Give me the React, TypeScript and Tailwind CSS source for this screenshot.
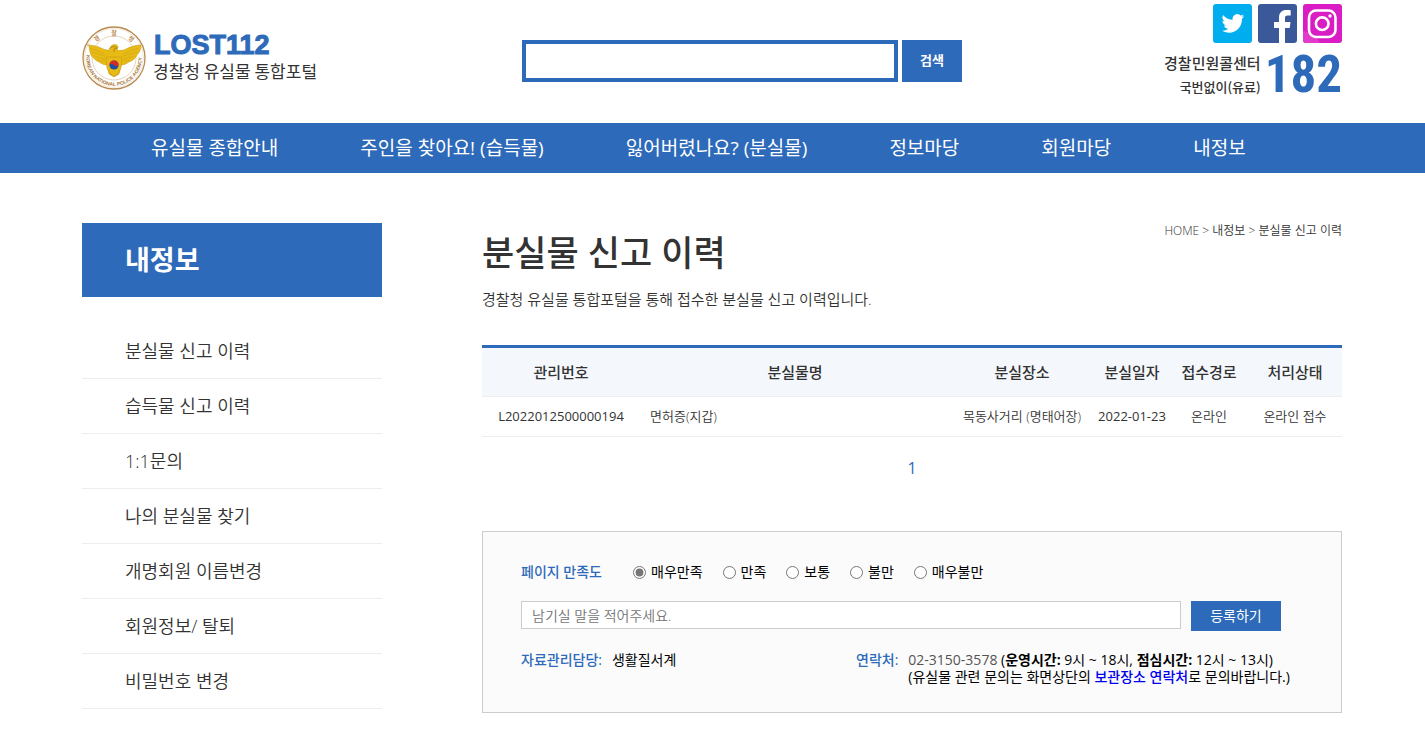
import React from 'react';

const navItems = ['유실물 종합안내', '주인을 찾아요! (습득물)', '잃어버렸나요? (분실물)', '정보마당', '회원마당', '내정보'];

const sideItems = ['분실물 신고 이력', '습득물 신고 이력', '1:1문의', '나의 분실물 찾기', '개명회원 이름변경', '회원정보/ 탈퇴', '비밀번호 변경'];

const ratings = ['매우만족', '만족', '보통', '불만', '매우불만'];

function Emblem() {
  return (
    <svg viewBox="0 0 64 64" className="h-16 w-16 shrink-0" aria-hidden="true">
      <defs>
        <path id="ring-bottom" d="M4.8 27 A27.7 27.7 0 1 0 59.2 27" />
      </defs>
      <circle cx="32" cy="32" r="31" fill="#fff" stroke="#b98a52" strokeWidth="1.3" />
      <circle cx="32" cy="32" r="29.4" fill="none" stroke="#e3cfb2" strokeWidth="0.5" />
      <circle cx="32" cy="32" r="22" fill="none" stroke="#d9c09c" strokeWidth="0.7" />
      <g fill="#e8bb14" stroke="#c09212" strokeWidth="0.5">
        <path d="M5 19c5 0 10 1 14 3 4 2 6 2 9 2 0-3 1-5 4-5.500 3 0 4 1 4 3l-1 3c4 0 7 0 10-2 4-2 9-3.500 14-3.500 0 5-2 8-4 10-2 4-5 6-8 7-3 2-5 3-8 3l-2 9-5 3-5-3-2-9c-3 0-5-1-8-3-3-1-6-4-8-7-1-3-2-6-2-10z" />
        <path d="M24 31h16l-1 11-3 6-4 2-4-2-3-6z" />
      </g>
      <path d="M8 22l15 6M9 26l14 4M12 30l11 3M16 34l7 1M56 22l-15 6M55 26l-14 4M52 30l-11 3M48 34l-7 1" stroke="#cfa21a" strokeWidth="0.6" fill="none" />
      <path d="M27 23c2-3 6-3 8-1l-3 1v3" fill="none" stroke="#a07c18" strokeWidth="0.8" />
      <circle cx="32" cy="39" r="4.600" fill="#1f4fa3" />
      <path d="M27.400 39a4.600 4.600 0 0 1 9.200 0c-1.500 2-3.500 1-4.600 0s-3.200-1.500-4.600 0z" fill="#d52b2b" />
      <text className="font-['Liberation_Sans',sans-serif] text-[5px] font-bold" fill="#a87838">
        <textPath href="#ring-bottom" startOffset="2">KOREAN NATIONAL POLICE AGENCY</textPath>
      </text>
      <g className="font-['Noto_Sans_CJK_KR',sans-serif] text-[6px] font-bold" fill="#b98a52" textAnchor="middle">
        <text x="16" y="14.500" transform="rotate(-35 16 14.500)">경</text>
        <text x="32" y="9">찰</text>
        <text x="48" y="14.500" transform="rotate(35 48 14.500)">청</text>
      </g>
    </svg>
  );
}

function Twitter() {
  return (
    <svg viewBox="0 0 39 39" className="size-[39px]" aria-hidden="true">
      <rect width="39" height="39" rx="3" fill="#00aeef" />
      <path transform="translate(8.500 8) scale(.95)" fill="#fff" d="M23.950 4.570a10 10 0 0 1-2.820.770 4.960 4.960 0 0 0 2.160-2.720c-.950.550-2.010.960-3.130 1.180a4.920 4.920 0 0 0-8.380 4.480C7.690 8.090 4.070 6.130 1.640 3.160a4.820 4.820 0 0 0-.670 2.480c0 1.710.870 3.210 2.190 4.090a4.900 4.900 0 0 1-2.230-.610v.060c0 2.380 1.700 4.370 3.950 4.830a5 5 0 0 1-2.210.080 4.940 4.940 0 0 0 4.600 3.420A9.870 9.870 0 0 1 0 19.540a14 14 0 0 0 7.550 2.210c9.050 0 14-7.500 14-13.980 0-.210 0-.420-.020-.630a9.940 9.940 0 0 0 2.460-2.550z" />
    </svg>
  );
}

function Facebook() {
  return (
    <svg viewBox="0 0 39 39" className="size-[39px]" aria-hidden="true">
      <rect width="39" height="39" rx="3" fill="#3b5998" />
      <path fill="#fff" d="M21 39V24h-5v-6h5v-4.500C21 8.500 24 6 28.500 6c2 0 3.700.100 4.200.200v5.300h-3c-2.300 0-2.700 1.100-2.700 2.700V18h5.500l-.800 6H27v15z" />
    </svg>
  );
}

function Instagram() {
  return (
    <svg viewBox="0 0 39 39" className="size-[39px]" aria-hidden="true">
      <rect width="39" height="39" rx="3" fill="#d91cc3" />
      <path d="M0 27c6 1 13 5 17 12H3a3 3 0 0 1-3-3z" fill="#e23bc9" />
      <g fill="none" stroke="#fff" strokeWidth="2.600">
        <rect x="6" y="6.500" width="26.500" height="26.500" rx="7" />
        <circle cx="19.200" cy="19.700" r="6.300" />
      </g>
      <circle cx="27" cy="12" r="1.700" fill="#fff" />
    </svg>
  );
}

export default function App() {
  return (
    <div className="bg-white font-['Open_Sans','Noto_Sans_CJK_KR',sans-serif] text-[#333]">
      <header className="mx-auto grid h-[123px] max-w-[1261px] grid-cols-[440px_1fr_auto] pr-px">
        <a href="#" className="mt-[26px] flex h-16 gap-[7px]">
          <Emblem />
          <span className="flex flex-col pt-[5px]">
            <span className="pl-px font-['Liberation_Sans',sans-serif] text-[27px] leading-7 font-bold text-[#2d6ab9] [-webkit-text-stroke:1px_#2d6ab9]">LOST112</span>
            <span className="font-['Noto_Sans_CJK_KR',sans-serif] text-[17px] leading-6">경찰청 유실물 통합포털</span>
          </span>
        </a>
        <form className="mt-10 flex gap-1" onSubmit={(e) => e.preventDefault()}>
          <input aria-label="검색어" type="text" className="h-[42px] w-[376px] border-4 border-[#2d6ab9] bg-white px-2 outline-none" />
          <button type="submit" className="h-[42px] w-[60px] bg-[#2d6ab9] text-[13px] font-bold text-white">검색</button>
        </form>
        <div className="flex flex-col items-end pt-1">
          <div className="flex gap-[6px]">
            <a href="#" aria-label="트위터"><Twitter /></a>
            <a href="#" aria-label="페이스북"><Facebook /></a>
            <a href="#" aria-label="인스타그램"><Instagram /></a>
          </div>
          <div className="mt-2 flex gap-1">
            <div className="text-right font-['Noto_Sans_CJK_KR',sans-serif] font-medium">
              <p className="text-[15px] leading-6">경찰민원콜센터</p>
              <p className="text-[13px] leading-6">국번없이(유료)</p>
            </div>
            <strong className="font-['Roboto_Condensed','Liberation_Sans_Narrow','Liberation_Sans',sans-serif] text-[51px] leading-[48px] text-[#2d6ab9]">182</strong>
          </div>
        </div>
      </header>

      <nav className="bg-[#2d6ab9]">
        <ul className="mx-auto flex h-[50px] max-w-[1261px] items-center gap-[82px] pl-[69px] text-[19px] text-white">
          {navItems.map((item) => (
            <li key={item} className="whitespace-nowrap"><a href="#">{item}</a></li>
          ))}
        </ul>
      </nav>

      <div className="mx-auto flex max-w-[1261px] gap-[100px] pt-[50px] pr-px">
        <aside className="w-[300px] shrink-0">
          <h2 className="flex h-[74px] items-center bg-[#2d6ab9] pl-[43px] text-[27px] font-bold text-white">내정보</h2>
          <ul className="mt-[27px] text-lg font-[350]">
            {sideItems.map((item) => (
              <li key={item} className="border-b border-[#eee]">
                <a href="#" className="flex h-[54px] items-center pl-[43px]">{item}</a>
              </li>
            ))}
          </ul>
        </aside>

        <main className="min-w-0 flex-1">
          <div className="flex items-start justify-between">
            <h1 className="pt-[7px] text-[35px] leading-[46px] font-medium">분실물 신고 이력</h1>
            <p className="text-xs leading-4 font-[350]">HOME &gt; 내정보 &gt; 분실물 신고 이력</p>
          </div>
          <p className="mt-[11px] text-[15px] leading-6 font-[350]">경찰청 유실물 통합포털을 통해 접수한 분실물 신고 이력입니다.</p>

          <table className="mt-[34px] w-full table-fixed border-t-3 border-[#2d6ab9] text-center text-[13px] font-[350]">
            <colgroup>
              <col className="w-[158px]" />
              <col />
              <col className="w-[144px]" />
              <col className="w-[76px]" />
              <col className="w-[78px]" />
              <col className="w-[94px]" />
            </colgroup>
            <thead className="bg-[#f4f7fc] text-[15px]">
              <tr className="h-[50px] border-b border-[#eee]">
                {['관리번호', '분실물명', '분실장소', '분실일자', '접수경로', '처리상태'].map((h) => (
                  <th key={h} className="font-medium">{h}</th>
                ))}
              </tr>
            </thead>
            <tbody>
              <tr className="h-10 border-b border-[#eee] whitespace-nowrap">
                <td className="font-normal">L2022012500000194</td>
                <td className="pl-[10px] text-left"><a href="#">면허증(지갑)</a></td>
                <td>목동사거리 (명태어장)</td>
                <td className="font-normal">2022-01-23</td>
                <td>온라인</td>
                <td>온라인 접수</td>
              </tr>
            </tbody>
          </table>

          <div className="mt-[19px] text-center leading-6 text-[#2d6ab9]"><a href="#">1</a></div>

          <form className="mt-[51px] border border-[#ccc] bg-[#fbfbfb] px-[38px] pt-7 pb-[27px] text-sm text-black" onSubmit={(e) => e.preventDefault()}>
            <fieldset className="flex h-6 items-center gap-5">
              <legend className="float-left mr-[9px] w-[83px] font-medium whitespace-nowrap text-[#2d6ab9]">페이지 만족도</legend>
              {ratings.map((r, i) => (
                <label key={r} className="flex items-center gap-[5px] whitespace-nowrap">
                  <input type="radio" name="satisfaction" defaultChecked={i === 0} className="m-0 size-[13px] accent-[#767676]" />
                  {r}
                </label>
              ))}
            </fieldset>
            <div className="mt-[17px] flex gap-[10px] pr-[22px]">
              <input aria-label="의견" type="text" placeholder="남기실 말을 적어주세요." className="h-7 min-w-0 flex-1 border border-[#ccc] bg-white px-[10px] font-[350] placeholder:text-[#757575]" />
              <button type="submit" className="h-[30px] w-[90px] bg-[#2d6ab9] text-white">등록하기</button>
            </div>
            <div className="mt-5 flex leading-[17px]">
              <p className="w-[335px] shrink-0"><span className="mr-[10px] font-medium text-[#2d6ab9]">자료관리담당:</span>생활질서계</p>
              <p className="mr-[10px] shrink-0 font-medium text-[#2d6ab9]">연락처:</p>
              <p className="whitespace-nowrap">
                <span className="text-[#555]">02-3150-3578</span> (<strong className="font-bold">운영시간:</strong> 9시 ~ 18시, <strong className="font-bold">점심시간:</strong> 12시 ~ 13시)
                <br />
                (유실물 관련 문의는 화면상단의 <a href="#" className="font-medium text-[#0000ee]">보관장소 연락처</a>로 문의바랍니다.)
              </p>
            </div>
          </form>
        </main>
      </div>
    </div>
  );
}
